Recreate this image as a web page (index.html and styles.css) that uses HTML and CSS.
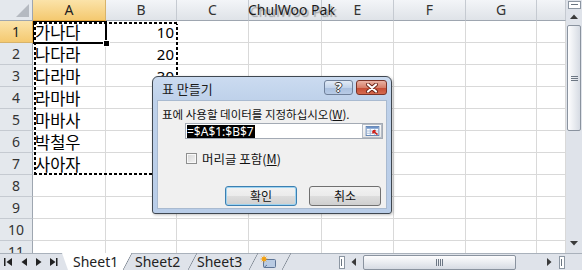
FILE: index.html
```html
<!DOCTYPE html>
<html>
<head>
<meta charset="utf-8">
<link rel="stylesheet" href="styles.css">
</head>
<body>
<div class="app">
  <div class="main">
    <div class="sheet">
      <div class="row hdr">
        <div class="c ch w0 corner"><span class="tri"></span></div>
        <div class="c ch w1 selh">A</div>
        <div class="c ch w2">B</div>
        <div class="c ch w3">C</div>
        <div class="c ch w4"></div>
        <div class="c ch w5">E</div>
        <div class="c ch w6">F</div>
        <div class="c ch w7">G</div>
        <div class="c ch w8"></div>
      </div>
      <div class="row"><div class="c rh w0 selr">1</div><div class="c t w1">가나다</div><div class="c n w2">10</div><div class="c w3"></div><div class="c w4"></div><div class="c w5"></div><div class="c w6"></div><div class="c w7"></div><div class="c w8"></div></div>
      <div class="row"><div class="c rh w0">2</div><div class="c t w1">나다라</div><div class="c n w2">20</div><div class="c w3"></div><div class="c w4"></div><div class="c w5"></div><div class="c w6"></div><div class="c w7"></div><div class="c w8"></div></div>
      <div class="row"><div class="c rh w0">3</div><div class="c t w1">다라마</div><div class="c n w2">30</div><div class="c w3"></div><div class="c w4"></div><div class="c w5"></div><div class="c w6"></div><div class="c w7"></div><div class="c w8"></div></div>
      <div class="row"><div class="c rh w0">4</div><div class="c t w1">라마바</div><div class="c n w2"></div><div class="c w3"></div><div class="c w4"></div><div class="c w5"></div><div class="c w6"></div><div class="c w7"></div><div class="c w8"></div></div>
      <div class="row"><div class="c rh w0">5</div><div class="c t w1">마바사</div><div class="c n w2"></div><div class="c w3"></div><div class="c w4"></div><div class="c w5"></div><div class="c w6"></div><div class="c w7"></div><div class="c w8"></div></div>
      <div class="row"><div class="c rh w0">6</div><div class="c t w1">박철우</div><div class="c n w2"></div><div class="c w3"></div><div class="c w4"></div><div class="c w5"></div><div class="c w6"></div><div class="c w7"></div><div class="c w8"></div></div>
      <div class="row"><div class="c rh w0">7</div><div class="c t w1">사아자</div><div class="c n w2"></div><div class="c w3"></div><div class="c w4"></div><div class="c w5"></div><div class="c w6"></div><div class="c w7"></div><div class="c w8"></div></div>
      <div class="row"><div class="c rh w0">8</div><div class="c w1"></div><div class="c w2"></div><div class="c w3"></div><div class="c w4"></div><div class="c w5"></div><div class="c w6"></div><div class="c w7"></div><div class="c w8"></div></div>
      <div class="row"><div class="c rh w0">9</div><div class="c w1"></div><div class="c w2"></div><div class="c w3"></div><div class="c w4"></div><div class="c w5"></div><div class="c w6"></div><div class="c w7"></div><div class="c w8"></div></div>
      <div class="row"><div class="c rh w0">10</div><div class="c w1"></div><div class="c w2"></div><div class="c w3"></div><div class="c w4"></div><div class="c w5"></div><div class="c w6"></div><div class="c w7"></div><div class="c w8"></div></div>
      <div class="row"><div class="c rh w0">11</div><div class="c w1"></div><div class="c w2"></div><div class="c w3"></div><div class="c w4"></div><div class="c w5"></div><div class="c w6"></div><div class="c w7"></div><div class="c w8"></div></div>

      <div class="activecell"><span class="handle"></span></div>
      <div class="marquee"></div>
      <div class="author">ChulWoo Pak</div>

      <div class="dialog">
        <div class="titlebar">
          <div class="title">표 만들기</div>
          <div class="tbtns">
            <div class="tb help">?</div>
            <div class="tb close">
              <svg width="14" height="10" viewBox="0 0 14 10"><path d="M3 1.5 L11 8.5 M11 1.5 L3 8.5" stroke="#6a2418" stroke-width="4" stroke-linecap="round"/><path d="M3 1.5 L11 8.5 M11 1.5 L3 8.5" stroke="#fff" stroke-width="2.2" stroke-linecap="round"/></svg>
            </div>
          </div>
        </div>
        <div class="body">
          <div class="lbl">표에 사용할 데이터를 지정하십시오(<u>W</u>).</div>
          <div class="input">
            <span class="seltext">=$A$1:$B$7</span>
            <span class="rbtn">
              <svg width="15" height="11" viewBox="0 0 15 11">
                <rect x="0.5" y="0.5" width="14" height="10" fill="#fff" stroke="#5b7fb0"/>
                <rect x="1" y="1" width="13" height="2" fill="#6d93c8"/>
                <path d="M1 5.5H14M1 8H14M5 3V10M10 3V10" stroke="#9fb6d6" stroke-width="1"/>
                <path d="M13 9.5 L8 5.2 M8 5.2 L8 8.2 M8 5.2 L11 5.2" stroke="#d0231c" stroke-width="1.6" fill="none"/>
              </svg>
            </span>
          </div>
          <div class="chkrow"><span class="chk"></span><span class="chklbl">머리글 포함(<u>M</u>)</span></div>
          <div class="btnrow">
            <div class="btn def">확인</div>
            <div class="btn">취소</div>
          </div>
        </div>
      </div>
    </div>
    <div class="vscroll">
      <div class="vsplit"></div>
      <svg class="varrow" width="8" height="5" viewBox="0 0 8 5"><path d="M0 5 L4 0.5 L8 5 Z" fill="#3a3a3a"/></svg>
      <div class="vthumb"><span class="grip"></span></div>
      <div class="vspace"></div>
      <svg class="varrow down" width="8" height="5" viewBox="0 0 8 5"><path d="M0 0 L8 0 L4 4.5 Z" fill="#3a3a3a"/></svg>
    </div>
  </div>
  <div class="bottom">
    <div class="nav">
      <svg width="62" height="16" viewBox="0 0 62 16">
        <rect x="4" y="4" width="1.5" height="8" fill="#222"/>
        <path d="M12 4 L6.5 8 L12 12 Z" fill="#222"/>
        <path d="M27 4 L21.5 8 L27 12 Z" fill="#222"/>
        <path d="M36 4 L41.5 8 L36 12 Z" fill="#222"/>
        <path d="M50 4 L55.5 8 L50 12 Z" fill="#222"/>
        <rect x="56" y="4" width="1.5" height="8" fill="#222"/>
      </svg>
    </div>
    <div class="tabs">
      <div class="tab cur t1"><span class="tx">Sheet1</span></div>
      <div class="tab t2"><span class="tx">Sheet2</span></div>
      <div class="tab t3"><span class="tx">Sheet3</span></div>
      <div class="tab t4">
        <svg class="tx" width="18" height="14" viewBox="0 0 18 14">
          <rect x="4.5" y="4.5" width="12" height="8" rx="1" fill="#b9cbe3" stroke="#5e7596"/>
          <path d="M5 12.5 L8 10" stroke="#5e7596"/>
          <circle cx="5" cy="4" r="2.2" fill="#f6b21c"/>
          <path d="M5 0.5V7.5M1.5 4H8.5M2.6 1.6L7.4 6.4M7.4 1.6L2.6 6.4" stroke="#f39a10" stroke-width="0.8"/>
        </svg>
      </div>
    </div>
    <div class="hspace"></div>
    <div class="hbar">
      <div class="hsplit"></div>
      <svg class="harrow" width="5" height="8" viewBox="0 0 5 8"><path d="M5 0 L0.5 4 L5 8 Z" fill="#3a3a3a"/></svg>
      <div class="hthumb"><span class="hgrip"></span></div>
      <div class="hfill"></div>
      <svg class="harrow" width="5" height="8" viewBox="0 0 5 8"><path d="M0 0 L4.5 4 L0 8 Z" fill="#3a3a3a"/></svg>
      <div class="hsplit r"></div>
      <div class="hcorner"></div>
    </div>
  </div>
</div>
</body>
</html>
```

FILE: styles.css
```css
html, body {
  margin: 0;
  padding: 0;
}
body {
  width: 582px;
  height: 270px;
  overflow: hidden;
  background: #fff;
  font-family: "Noto Sans", "Noto Sans CJK KR", sans-serif;
}
.app {
  width: 582px;
  height: 270px;
  display: flex;
  flex-direction: column;
  overflow: hidden;
}
.main {
  display: flex;
  height: 253px;
  flex: none;
}
.sheet {
  position: relative;
  width: 566px;
  height: 253px;
  overflow: hidden;
  flex: none;
}
.row {
  display: flex;
  height: 22px;
}
.row.hdr {
  height: 21px;
}
.c {
  box-sizing: border-box;
  flex: none;
  height: 100%;
  border-right: 1px solid #d9d9d9;
  border-bottom: 1px solid #d9d9d9;
  display: flex;
  align-items: center;
  overflow: hidden;
  white-space: nowrap;
  line-height: 18px;
}
.w0 { width: 33px; }
.w1 { width: 73px; }
.w2 { width: 71px; }
.w3 { width: 72px; }
.w4 { width: 73px; }
.w5 { width: 72px; }
.w6 { width: 72px; }
.w7 { width: 71px; }
.w8 { width: 29px; }

.ch {
  background: linear-gradient(#f3f5f8, #dfe3e8);
  border-right: 1px solid #c5cad1;
  border-bottom: 1px solid #9ea6b0;
  justify-content: center;
  font-size: 14px;
  color: #333;
}
.rh {
  background: #e4e8ed;
  border-right: 1px solid #9ea6b0;
  border-bottom: 1px solid #c5cad1;
  justify-content: center;
  font-size: 14px;
  color: #333;
}
.corner {
  position: relative;
  background: #e4e8ed;
  border-right: 1px solid #9ea6b0;
}
.tri {
  position: absolute;
  right: 3px;
  bottom: 3px;
  width: 13px;
  height: 13px;
  background: #b5bac1;
  clip-path: polygon(100% 0, 100% 100%, 0 100%);
}
.selh {
  background: linear-gradient(#fbe3a9, #f4c970);
  border-bottom: 1px solid #e4a33a;
  border-right: 1px solid #d7b36a;
  color: #222;
}
.selr {
  background: linear-gradient(#fbe3a9, #f4c970);
  border-right: 1px solid #e4a33a;
  border-bottom: 1px solid #d7b36a;
  color: #222;
}
.t {
  padding-left: 2px;
  font-family: "Noto Sans CJK KR", sans-serif;
  font-size: 16.5px;
  line-height: 20px;
  color: #000;
}
.n {
  justify-content: flex-end;
  padding-right: 2px;
  font-family: "Noto Sans", sans-serif;
  font-size: 15px;
  line-height: 20px;
  color: #000;
}

.activecell {
  position: absolute;
  left: 33px;
  top: 21px;
  width: 74px;
  height: 23px;
  box-sizing: border-box;
  border: 2px solid #000;
}
.handle {
  position: absolute;
  right: -4px;
  bottom: -4px;
  width: 5px;
  height: 5px;
  background: #000;
  outline: 1px solid #fff;
}
.marquee {
  position: absolute;
  left: 34px;
  top: 22px;
  width: 144px;
  height: 153px;
  background:
    repeating-linear-gradient(90deg, #000 0 3px, #fff 3px 5px) left top / 100% 2px no-repeat,
    repeating-linear-gradient(90deg, #000 0 3px, #fff 3px 5px) left bottom / 100% 2px no-repeat,
    repeating-linear-gradient(180deg, #000 0 3px, #fff 3px 5px) left top / 2px 100% no-repeat,
    repeating-linear-gradient(180deg, #000 0 3px, #fff 3px 5px) right top / 2px 100% no-repeat;
}
.author {
  position: absolute;
  left: 248px;
  top: 0px;
  font-family: "Noto Sans", sans-serif;
  font-size: 14px;
  color: #1a1a1a;
  text-shadow: 2px 2px 1px rgba(0, 0, 0, 0.3);
}

/* dialog */
.dialog {
  position: absolute;
  left: 152px;
  top: 76px;
  width: 240px;
  height: 138px;
  box-sizing: border-box;
  border: 1px solid #3f4750;
  border-radius: 6px 6px 3px 3px;
  background: linear-gradient(#cbdbf0, #bed1ea 24px, #b9cde8);
  padding: 0 4px 4px 4px;
  display: flex;
  flex-direction: column;
  box-shadow: 1px 1px 3px rgba(0, 0, 0, 0.25);
  font-family: "Noto Sans CJK KR", sans-serif;
  color: #111;
}
.titlebar {
  height: 23px;
  flex: none;
  display: flex;
  align-items: flex-start;
}
.title {
  margin: 4px 0 0 5px;
  font-size: 13px;
  line-height: 15px;
  color: #1b1b1b;
}
.tbtns {
  margin-left: auto;
  margin-top: 3px;
  display: flex;
  gap: 3px;
}
.tb {
  box-sizing: border-box;
  height: 15px;
  border-radius: 3px;
  display: flex;
  align-items: center;
  justify-content: center;
}
.help {
  width: 29px;
  border: 1px solid #6f809a;
  background: linear-gradient(#e2ebf6, #c3d4eb 50%, #a9bfde 51%, #b8cbe6);
  font-family: "Noto Sans", sans-serif;
  font-weight: bold;
  font-size: 13px;
  line-height: 1;
  color: #fff;
  text-shadow: -1px 0 #444, 1px 0 #444, 0 -1px #444, 0 1px #444;
}
.close {
  width: 31px;
  border: 1px solid #7a3328;
  background: linear-gradient(#eab2a4, #d7806b 50%, #c44a33 51%, #d56a4f);
}
.body {
  flex: 1;
  box-sizing: border-box;
  background: #f0f0f0;
  border: 1px solid #a9bad0;
  display: flex;
  flex-direction: column;
  padding-left: 4px;
}
.lbl {
  margin-top: 5px;
  font-size: 11.5px;
  line-height: 16px;
  white-space: nowrap;
}
.input {
  margin-top: 1px;
  margin-left: 23px;
  width: 198px;
  height: 16px;
  box-sizing: border-box;
  border: 1px solid #a3aab4;
  background: #fff;
  display: flex;
  align-items: center;
  padding-left: 1px;
}
.seltext {
  background: #000;
  color: #fff;
  font-family: "Noto Sans", sans-serif;
  font-size: 12px;
  line-height: 13px;
  height: 13px;
  padding-right: 1px;
}
.rbtn {
  margin-left: auto;
  width: 20px;
  height: 14px;
  box-sizing: border-box;
  border: 1px solid #b5bcc6;
  background: linear-gradient(#fafafa, #e6e6e6);
  display: flex;
  align-items: center;
  justify-content: center;
}
.rbtn svg {
  width: 15px;
  height: 10px;
}
.chkrow {
  margin-top: 13px;
  margin-left: 24px;
  display: flex;
  align-items: center;
  height: 13px;
}
.chk {
  width: 11px;
  height: 11px;
  box-sizing: border-box;
  border: 1px solid #8e8f8f;
  background: linear-gradient(135deg, #d6d6d6, #f4f4f4);
  box-shadow: inset 0 0 0 1px #f8f8f8;
}
.chklbl {
  margin-left: 5px;
  font-size: 12.5px;
  line-height: 15px;
}
.btnrow {
  margin-top: 21px;
  margin-left: 63px;
  display: flex;
  gap: 12px;
}
.btn {
  width: 72px;
  height: 20px;
  box-sizing: border-box;
  border: 1px solid #707070;
  border-radius: 3px;
  background: linear-gradient(#f2f2f2, #ebebeb 50%, #dddddd 51%, #cfcfcf);
  display: flex;
  align-items: center;
  justify-content: center;
  font-size: 12px;
  line-height: 1;
  color: #111;
}
.btn.def {
  border-color: #3c7fb1;
  box-shadow: inset 0 0 0 1px #9ed3f0;
}

/* vertical scrollbar */
.vscroll {
  width: 16px;
  height: 253px;
  flex: none;
  background: #dfe3ea;
  display: flex;
  flex-direction: column;
  align-items: center;
}
.vsplit {
  margin-top: 1px;
  width: 13px;
  height: 8px;
  box-sizing: border-box;
  border: 1px solid #8c96a2;
  background: #fff;
  position: relative;
}
.vsplit::after {
  content: "";
  position: absolute;
  left: 2px;
  right: 2px;
  top: 2px;
  height: 1px;
  background: #6a7480;
}
.varrow {
  margin-top: 5px;
  flex: none;
}
.vthumb {
  margin-top: 6px;
  width: 14px;
  height: 106px;
  box-sizing: border-box;
  border: 1px solid #8a939f;
  border-radius: 2px;
  background: linear-gradient(90deg, #fdfdfe, #e6e9ee 60%, #d6dbe3);
  display: flex;
  align-items: center;
  justify-content: center;
}
.grip {
  width: 7px;
  height: 5px;
  background: repeating-linear-gradient(180deg, #6d7784 0 1px, transparent 1px 2px);
}
.vspace {
  flex: 1;
}
.varrow.down {
  margin-top: 0;
  margin-bottom: 7px;
}

/* bottom bar */
.bottom {
  height: 17px;
  flex: none;
  display: flex;
  background: #dfe3ea;
  box-sizing: border-box;
  border-top: 1px solid #a9b1bb;
}
.nav {
  width: 62px;
  flex: none;
  display: flex;
  align-items: center;
}
.tabs {
  display: flex;
  height: 16px;
}
.tab {
  position: relative;
  height: 16px;
  box-sizing: border-box;
  display: flex;
  align-items: center;
  font-family: "Noto Sans", sans-serif;
  font-size: 14px;
  line-height: 16px;
  color: #222;
  flex: none;
}
.tx {
  position: relative;
  z-index: 2;
}
.tab::after {
  content: "";
  position: absolute;
  right: 0;
  top: -1px;
  width: 9px;
  height: 17px;
  z-index: 1;
  background: linear-gradient(to top left, transparent calc(50% - 0.7px), #7f8893 50%, transparent calc(50% + 0.7px));
}
.tab.cur::before {
  content: "";
  position: absolute;
  left: 0;
  top: -1px;
  right: 0;
  bottom: 0;
  background: #fff;
  clip-path: polygon(0 0, 100% 0, calc(100% - 9px) 100%, 6px 100%);
  z-index: 0;
}
.t1 { width: 70px; padding-left: 11px; }
.t2 { width: 65px; padding-left: 3px; }
.t3 { width: 61px; padding-left: 0; }
.t4 { width: 33px; padding-left: 1px; }
.hspace {
  flex: 1;
}
.hbar {
  display: flex;
  align-items: center;
  width: 243px;
  flex: none;
}
.hsplit {
  width: 6px;
  height: 13px;
  box-sizing: border-box;
  border: 1px solid #8c96a2;
  background: #fff;
  position: relative;
  flex: none;
}
.hsplit::after {
  content: "";
  position: absolute;
  top: 2px;
  bottom: 2px;
  left: 1px;
  width: 1px;
  background: #6a7480;
}
.harrow {
  margin: 0 7px 0 6px;
  flex: none;
}
.hthumb {
  width: 153px;
  height: 15px;
  box-sizing: border-box;
  border: 1px solid #8a939f;
  border-radius: 2px;
  background: linear-gradient(#fdfdfe, #e6e9ee 60%, #d6dbe3);
  display: flex;
  align-items: center;
  justify-content: center;
  flex: none;
}
.hgrip {
  width: 7px;
  height: 7px;
  background: repeating-linear-gradient(90deg, #6d7784 0 1px, transparent 1px 2px);
}
.hfill {
  flex: 1;
}
.hcorner {
  width: 17px;
  flex: none;
}
```
